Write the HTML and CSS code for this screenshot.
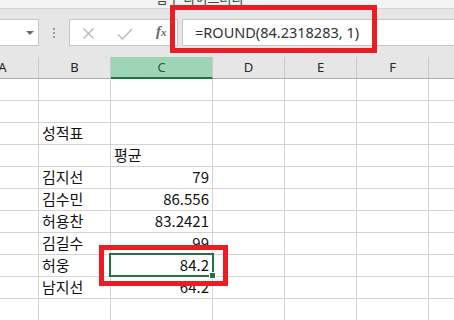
FILE: index.html
```html
<!DOCTYPE html>
<html lang="ko">
<head>
    <meta charset="UTF-8">
    <meta name="viewport" content="width=device-width, initial-scale=1.0">
    <title>ROUND 함수</title>
    <link rel="stylesheet" href="styles.css">
</head>
<body>

    <!-- bottom of the ribbon, cut off -->
    <div class="ribbon-tail">
        <span class="group-label">함수 라이브러리</span>
    </div>

    <!-- formula bar -->
    <div class="formula-bar">
        <div class="name-box"><span class="arrow"></span></div>
        <div class="grip"><i></i><i></i><i></i></div>
        <div class="fn-buttons">
            <svg class="btn-cancel" width="13" height="11" viewBox="0 0 13 11">
                <path d="M1.5 0.5 L11.5 10.5 M11.5 0.5 L1.5 10.5" stroke="#b8b8b8" stroke-width="1.4" fill="none"/>
            </svg>
            <svg class="btn-enter" width="16" height="12" viewBox="0 0 16 12">
                <path d="M1 6.5 L5.5 11 L15 1" stroke="#b8b8b8" stroke-width="1.4" fill="none"/>
            </svg>
            <span class="fx">f<small>x</small></span>
        </div>
        <div class="formula-input">=ROUND(84.2318283, 1)</div>
    </div>

    <!-- sheet -->
    <div class="sheet">
        <div class="col-head">A</div>
        <div class="col-head">B</div>
        <div class="col-head active">C</div>
        <div class="col-head">D</div>
        <div class="col-head">E</div>
        <div class="col-head">F</div>
        <div class="col-head"></div>
    </div>
    <div class="sheet" id="cells"></div>

    <!-- annotation boxes -->
    <div class="mark mark-formula"></div>
    <div class="mark mark-cell"></div>

    <script>
        // rows of the sheet: [B, C, align of C]
        var rows = [
            ["", ""],
            ["", ""],
            ["성적표", ""],
            ["", "평균", "left"],
            ["김지선", "79"],
            ["김수민", "86.556"],
            ["허용찬", "83.2421"],
            ["김길수", "99"],
            ["허웅", "84.2"],
            ["남지선", "64.2"],
            ["", ""]
        ];

        var cells = document.getElementById("cells");

        rows.forEach(function(row, i) {
            var values = ["", row[0], row[1], "", "", "", ""];
            values.forEach(function(value, col) {
                var cell = document.createElement("div");
                cell.className = "cell";
                if (col == 2 && row[2] != "left") {
                    cell.className += " num";
                }
                if (col == 2 && i == 8) {
                    cell.className += " selected";
                }
                cell.textContent = value;
                cells.appendChild(cell);
            });
        });
    </script>

</body>
</html>
```

FILE: styles.css
```css
body {
    margin: 0;
    width: 454px;
    height: 320px;
    overflow: hidden;
    position: relative;
    background-color: white;
    font-family: "Noto Sans", "Noto Sans CJK KR", sans-serif;
}

.ribbon-tail {
    height: 8px;
    background-color: #f3f3f3;
    border-bottom: 1px solid #d4d4d4;
    overflow: hidden;
    padding-left: 156px;
}

.group-label {
    display: block;
    margin-top: -10px;
    font-size: 13px;
    line-height: 16px;
    color: #444;
    font-family: "Noto Sans CJK KR", sans-serif;
}

.formula-bar {
    height: 48px;
    box-sizing: border-box;
    padding-top: 10px;
    background-color: #e6e6e6;
    display: flex;
    align-items: flex-start;
}

.name-box {
    width: 40px;
    height: 27px;
    margin-left: -1px;
    box-sizing: border-box;
    background-color: white;
    border: 1px solid #c6c6c6;
    position: relative;
}

.name-box .arrow {
    position: absolute;
    left: 26px;
    top: 11px;
    border-left: 4px solid transparent;
    border-right: 4px solid transparent;
    border-top: 4px solid #6a6a6a;
}

.grip {
    width: 30px;
    height: 27px;
    display: flex;
    flex-direction: column;
    align-items: center;
    justify-content: center;
    gap: 2px;
}

.grip i {
    width: 2px;
    height: 2px;
    background-color: #9a9a9a;
}

.fn-buttons {
    width: 109px;
    height: 27px;
    box-sizing: border-box;
    background-color: white;
    border: 1px solid #c6c6c6;
    position: relative;
}

.btn-cancel {
    position: absolute;
    left: 12px;
    top: 8px;
}

.btn-enter {
    position: absolute;
    left: 47px;
    top: 8px;
}

.fx {
    position: absolute;
    left: 86px;
    top: 3px;
    font-family: "Liberation Serif", serif;
    font-style: italic;
    font-weight: bold;
    font-size: 15px;
    color: #6b6b6b;
}

.fx small {
    font-size: 11px;
}

.formula-input {
    flex: 1;
    height: 27px;
    margin-left: 4px;
    box-sizing: border-box;
    background-color: white;
    border: 1px solid #c6c6c6;
    border-right: none;
    padding-left: 12px;
    font-size: 14.5px;
    line-height: 25px;
    color: #333;
}

.sheet {
    display: grid;
    grid-template-columns: 72px 72px 102px 72px 72px 72px 72px;
    margin-left: -33px;
}

.col-head {
    height: 22px;
    box-sizing: border-box;
    background-color: #e6e6e6;
    border-right: 1px solid #cacaca;
    border-bottom: 1px solid #ababab;
    text-align: center;
    font-size: 13px;
    line-height: 20px;
    color: #262626;
}

.col-head.active {
    background-color: #9fd5b7;
    border-bottom: 2px solid #217346;
    color: #1e5e3a;
}

.cell {
    height: 22px;
    box-sizing: border-box;
    border-right: 1px solid #d4d4d4;
    border-bottom: 1px solid #d4d4d4;
    padding: 0 3px;
    font-family: "Noto Sans CJK KR", sans-serif;
    font-size: 15px;
    line-height: 20px;
    color: #111;
    white-space: nowrap;
    overflow: visible;
}

.cell.num {
    text-align: right;
}

.cell.selected {
    position: relative;
}

.cell.selected::before {
    content: "";
    position: absolute;
    left: -2px;
    top: -2px;
    right: -2px;
    bottom: -1px;
    border: 2px solid #217346;
}

.cell.selected::after {
    content: "";
    position: absolute;
    right: -4px;
    bottom: -3px;
    width: 5px;
    height: 5px;
    background-color: #217346;
    border: 1px solid white;
}

.mark {
    position: absolute;
    border: 5px solid #ec1c24;
    box-sizing: border-box;
}

.mark-formula {
    left: 170px;
    top: 5px;
    width: 207px;
    height: 48px;
}

.mark-cell {
    left: 99px;
    top: 245px;
    width: 129px;
    height: 41px;
}
```
